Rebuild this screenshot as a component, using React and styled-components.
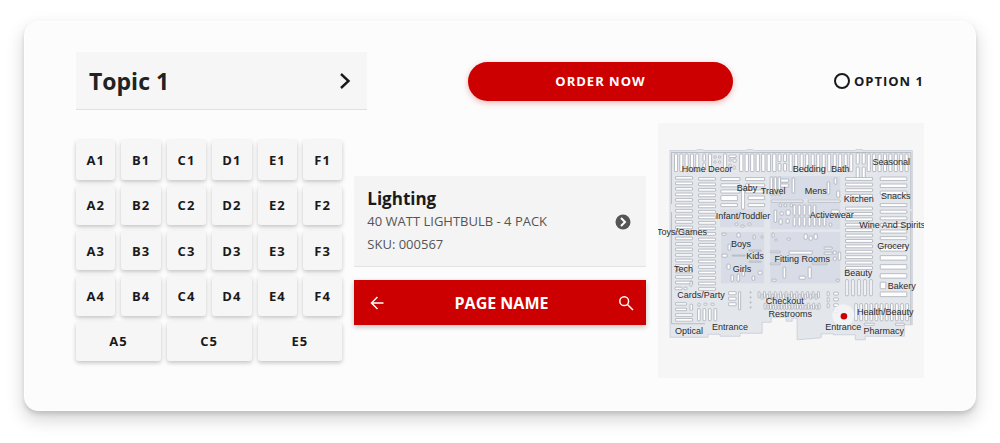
import React from "react";
import styled, { createGlobalStyle } from "styled-components";

const GlobalStyle = createGlobalStyle`
  *, *::before, *::after { box-sizing: border-box; }
  body {
    margin: 0;
    background: #fff;
    color: #1a1a1a;
    font-family: "Open Sans", "Noto Sans", sans-serif;
  }
  button { font-family: inherit; color: inherit; cursor: pointer; }
`;

const Page = styled.div`
  padding: 21px 24px 32px;
`;

const Board = styled.main`
  display: flex;
  flex-direction: column;
  gap: 13px;
  padding: 30px 51px 32px;
  background: #fcfcfc;
  border: 1px solid #fff;
  border-radius: 14px;
  box-shadow: 0 8px 18px rgba(0, 0, 0, 0.18), 0 3px 4px rgba(0, 0, 0, 0.12);
`;

const TopRow = styled.div`
  display: grid;
  grid-template-columns: 291fr 101fr 265fr 101fr auto;
  align-items: center;
`;

const Topic = styled.button`
  grid-column: 1;
  display: flex;
  align-items: center;
  justify-content: space-between;
  height: 58px;
  padding: 0 16px 0 13px;
  border: 0;
  border-bottom: 1px solid #e0e0e0;
  background: #f6f6f6;
  color: #222;
  font-size: 23px;
  font-weight: 700;
`;

const OrderButton = styled.button`
  grid-column: 3;
  height: 39px;
  border: 0;
  border-radius: 20px;
  background: #c00;
  color: #fff;
  font-size: 13px;
  font-weight: 700;
  letter-spacing: 1px;
  box-shadow: 0 2px 6px rgba(204, 0, 0, 0.28);
`;

const Option = styled.label`
  grid-column: 5;
  display: flex;
  align-items: center;
  gap: 4px;
  font-size: 13px;
  font-weight: 700;
  letter-spacing: 1px;
  white-space: nowrap;
`;

const Radio = styled.input`
  appearance: none;
  width: 16px;
  height: 16px;
  margin: 0;
  border: 2px solid #1a1a1a;
  border-radius: 50%;
  &:checked { background: #c00; }
`;

const Columns = styled.div`
  display: grid;
  grid-template-columns: 266fr 291fr 266fr;
  gap: 12px;
  align-items: center;
`;

const Keypad = styled.div`
  display: grid;
  grid-template-columns: repeat(6, 1fr);
  grid-auto-rows: 1fr;
  gap: 6px;
`;

const Key = styled.button`
  grid-column: span ${(p) => (p.$wide ? 2 : 1)};
  ${(p) => (p.$wide ? "" : "aspect-ratio: 1;")}
  padding: 0;
  border: 0;
  border-radius: 3px;
  background: #f6f6f6;
  font-size: 13px;
  font-weight: 700;
  letter-spacing: 1px;
  box-shadow: 0 2px 4px rgba(0, 0, 0, 0.22);
`;

const Stack = styled.div`
  display: flex;
  flex-direction: column;
  gap: 13px;
`;

const Product = styled.a`
  display: flex;
  align-items: center;
  justify-content: space-between;
  padding: 12px 15px 10px 13px;
  border-bottom: 1px solid #e2e2e2;
  background: #f4f4f4;
  color: #555;
  text-decoration: none;
`;

const ProductName = styled.h2`
  margin: 0;
  color: #1a1a1a;
  font-size: 17px;
  line-height: 22px;
  font-weight: 700;
`;

const ProductLine = styled.p`
  margin: 0;
  font-size: 13px;
  line-height: 23px;
`;

const PageBar = styled.header`
  display: flex;
  align-items: center;
  justify-content: space-between;
  height: 45px;
  padding: 0 12px 0 15px;
  background: #c00;
  color: #fff;
  box-shadow: 0 2px 5px rgba(0, 0, 0, 0.24);
`;

const PageTitle = styled.h1`
  margin: 0;
  font-size: 16px;
  font-weight: 700;
`;

const IconButton = styled.button`
  display: flex;
  padding: 0;
  border: 0;
  background: none;
  color: #fff;
`;

const MapPanel = styled.figure`
  margin: 0;
  background: #f6f6f6;
`;

const MapDrawing = styled.svg`
  display: block;
  width: 100%;
  height: auto;
`;

const MapLabel = styled.text`
  font-family: "Liberation Sans", Arial, sans-serif;
  font-size: 9px;
  fill: #2b2b2b;
`;

const ROWS = ["1", "2", "3", "4"];
const LETTERS = ["A", "B", "C", "D", "E", "F"];

const range = (n) => Array.from({ length: n }, (_, i) => i);
const down = (x, y, w, h, n, pitch) => range(n).map((i) => [x, y + i * pitch, w, h]);
const across = (x, y, w, h, n, pitch) => range(n).map((i) => [x + i * pitch, y, w, h]);

const ZONES = [
  [720, 209, 44, 18], [770, 176, 70, 23], [770, 202, 70, 27],
  [721, 232, 43, 51], [770, 232, 70, 51],
];

const SHELVES = [
  ...across(674.5, 154, 3, 17.5, 5, 5.3),
  ...down(703, 154, 2.5, 7, 2, 9), [708.5, 154, 3, 17],
  ...down(714, 156, 2, 2, 2, 5), ...down(718.5, 156, 2, 2, 2, 5),
  [723.5, 154, 3, 17.5], [729, 155, 7, 2.5], [729, 159, 2, 2], [733, 159, 3, 3], [729, 164, 2, 4], [733, 166, 2, 3],
  ...across(739.5, 154, 3.3, 17.5, 7, 5.5),
  ...down(778, 154, 2.8, 7.5, 2, 9.5), ...down(783.5, 154, 2.8, 7.5, 2, 9.5),
  ...across(789, 154, 3, 17.5, 12, 5.5),
  ...down(856, 153, 3, 11, 2, 14), ...down(862, 153, 3, 11, 2, 14),
  ...across(867, 154, 3, 17.5, 8, 5.4),
  ...down(675.5, 176.5, 17, 2.6, 20, 5.5),
  [675, 287, 7, 2.5], [684, 287, 3, 2.5], [690, 281, 2, 5],
  ...down(675.5, 302.5, 11, 2.4, 2, 5.5), ...down(675.5, 313.5, 17, 2.6, 2, 4.8),
  [690, 304, 2.5, 6],
  ...down(698.5, 177.5, 17, 2.6, 21, 5.5),
  ...across(697.5, 308.5, 2.6, 12, 4, 5.5), [698, 303, 2, 3], [704, 303, 3, 2], [711, 303, 3, 2],
  ...down(720.8, 177.5, 19, 3, 3, 6.2), [720.8, 195.5, 16.5, 5], [720.8, 203.5, 16.5, 3],
  ...down(745.5, 177.5, 19, 3, 3, 6.2), [748, 196, 16.5, 3.5], [748, 203.5, 16.5, 3],
  [741.5, 189, 3, 20],
  ...across(770, 177, 2.5, 18, 3, 4), [780.5, 179, 8, 3], [780.5, 184, 8, 3], [792, 178, 2.5, 15],
  [771, 200, 32, 2], [808, 200, 32, 2],
  [827, 182, 2.5, 12], [834, 178, 2.5, 6], [836.5, 191, 3, 6],
  [774, 210, 2.5, 12], [779, 204, 2.5, 2.5], [784, 204, 2.5, 2.5], [790, 204, 2.5, 2.5],
  [780, 212, 3, 3], [786, 210, 4, 5], [779, 219, 3, 5], [786, 219, 3, 4],
  ...across(793, 205, 2.6, 10, 5, 5), ...across(793, 217, 2.6, 9, 7, 5), [831, 210, 8, 3], [829, 223, 2.5, 3],
  [735, 223, 3, 2], [741, 225, 3, 2], [748, 223, 3, 2],
  [722, 233, 4, 2], [737, 233, 3, 4], [753, 235, 2, 4], [761, 236, 2, 2],
  [728, 244, 2.5, 6], [722, 254, 5, 3], [732, 255, 13, 0.8], [749, 250, 12, 1], [749, 261, 12, 1],
  [727, 264, 3, 5], [731, 275, 2.5, 6], [737, 274, 2.5, 7], [742, 271, 2.5, 5], [752, 276, 2.5, 4], [758, 271, 4, 3],
  [772, 233, 2, 4], [775, 239, 2, 2], [787, 238, 3, 2], [804, 234, 3, 5], [809, 236, 3, 4], [814, 234, 3, 5],
  [770, 251, 10, 1.5], [789, 251, 23, 3], [824, 247, 8, 2], [824, 252, 8, 2], [833, 251, 3, 3], [838, 252, 2.5, 8], [833, 257, 3, 3],
  [770, 263, 10, 1.5], [783, 267, 2.5, 11], [808, 267, 3, 11], [799, 276, 6, 3], [812, 263, 15, 1.5], [772, 279, 4, 2], [836, 279, 3, 2],
  ...down(845.3, 177.5, 27, 2.8, 4, 5.6), ...down(845.3, 207, 27, 2.8, 12, 5.4),
  ...across(845.5, 279.5, 2.5, 16, 5, 6),
  ...down(880, 177, 26.5, 3.4, 3, 7), ...down(880, 203.5, 26.5, 3, 6, 6.6),
  ...down(880, 246.5, 26.5, 4.4, 4, 9), [880, 282, 5.5, 6.5], [880, 291.8, 26.5, 4.6],
  ...across(854.5, 303.5, 2.6, 17, 11, 5.1),
  [864, 323, 10, 2], [895, 323, 9, 2],
  ...down(728.5, 291.5, 7.5, 3, 3, 5.5), [738.5, 291.5, 2, 18],
  ...down(750, 291.5, 1, 1.4, 4, 5), ...down(833.5, 292, 4.5, 2.8, 4, 5.8),
  ...across(758, 291.5, 1.8, 6, 12, 5.4), ...across(761, 294, 1.8, 5, 11, 5.4),
  ...across(764, 303, 1.8, 6, 11, 5.4), ...across(767, 305, 1.8, 4, 10, 5.4),
  ...down(827, 291.5, 2, 4, 3, 6),
];

const LABELS = [
  ["Home Decor", 707, 172], ["Bedding", 809, 172], ["Bath", 840, 172], ["Seasonal", 891, 165],
  ["Baby", 747, 191], ["Travel", 773, 194], ["Mens", 815.5, 194], ["Kitchen", 858.5, 202],
  ["Snacks", 895.5, 199], ["Infant/Toddler", 743, 219], ["Activewear", 831.5, 218],
  ["Wine And Spirits", 892, 228], ["Toys/Games", 682, 235], ["Boys", 741, 247],
  ["Kids", 755, 259], ["Fitting Rooms", 802, 262], ["Grocery", 893, 249],
  ["Tech", 683.5, 272], ["Girls", 742, 272], ["Beauty", 858, 276], ["Bakery", 901.5, 289],
  ["Cards/Party", 701, 298], ["Checkout", 784.5, 304], ["Restrooms", 790, 317],
  ["Health/Beauty", 885, 315], ["Optical", 689, 334], ["Entrance", 730, 330],
  ["Entrance", 843, 330], ["Pharmacy", 883.5, 334],
];

function StoreMap() {
  return (
    <MapDrawing viewBox="658 123 266 255" role="img" aria-label="Store map">
      <path
        d="M670 150.500H695L698 149.500H702L704 150.500H745L748 149.500H752L754 150.500H854L856 149.500H862V150.500H912V324.500H904V336H865V339.500H855V334.500H833V333.500H821V337.500L797 339.500V318H792V321H786V317H771V322H762V333H740V336H720V334H708V337H670Z"
        fill="#e3e6eb"
        stroke="#c8ccd6"
        strokeWidth="0.8"
      />
      <path d="M671.500 204V152.500H910.500V209M671.500 212V323.500H705M910.500 211V324" fill="none" stroke="#aeb4bb" strokeWidth="0.8" />
      {ZONES.map(([x, y, w, h], i) => (
        <rect key={i} x={x} y={y} width={w} height={h} fill="#d7dce6" />
      ))}
      {SHELVES.map(([x, y, w, h], i) => (
        <rect key={i} x={x} y={y} width={w} height={h} rx="0.4" fill="#fff" stroke="#959ba5" strokeWidth="0.6" />
      ))}
      <circle cx="843" cy="315" r="11" fill="#f3f4f7" fillOpacity="0.85" />
      {LABELS.map(([name, x, y], i) => (
        <MapLabel key={i} x={x} y={y} textAnchor="middle">{name}</MapLabel>
      ))}
      <circle cx="843.700" cy="316" r="3.300" fill="#c00" />
    </MapDrawing>
  );
}

export default function App() {
  return (
    <Page>
      <GlobalStyle />
      <Board>
        <TopRow>
          <Topic type="button">
            Topic 1
            <svg width="12" height="18" viewBox="0 0 12 18" fill="none" stroke="#1a1a1a" strokeWidth="2.400" aria-hidden="true">
              <path d="M2 2L9.500 9L2 16" />
            </svg>
          </Topic>
          <OrderButton type="button">ORDER NOW</OrderButton>
          <Option>
            <Radio type="radio" name="option" />
            OPTION 1
          </Option>
        </TopRow>
        <Columns>
          <Keypad>
            {ROWS.flatMap((row) =>
              LETTERS.map((letter) => (
                <Key key={letter + row} type="button">{letter + row}</Key>
              ))
            )}
            {["A5", "C5", "E5"].map((name) => (
              <Key key={name} type="button" $wide>{name}</Key>
            ))}
          </Keypad>
          <Stack>
            <Product href="#lighting">
              <div>
                <ProductName>Lighting</ProductName>
                <ProductLine>40 WATT LIGHTBULB - 4 PACK</ProductLine>
                <ProductLine>SKU: 000567</ProductLine>
              </div>
              <svg width="16" height="16" viewBox="0 0 16 16" aria-hidden="true">
                <circle cx="8" cy="8" r="7.500" fill="#555" />
                <path d="M6 4L10 8L6 12" fill="none" stroke="#fff" strokeWidth="2" />
              </svg>
            </Product>
            <PageBar>
              <IconButton type="button" aria-label="Back">
                <svg width="16" height="16" viewBox="0 0 16 16" fill="none" stroke="currentColor" strokeWidth="1.500">
                  <path d="M14.500 8H2.500M8.500 2L2.500 8L8.500 14" />
                </svg>
              </IconButton>
              <PageTitle>PAGE NAME</PageTitle>
              <IconButton type="button" aria-label="Search">
                <svg width="16" height="16" viewBox="0 0 16 16" fill="none" stroke="currentColor" strokeWidth="1.500">
                  <circle cx="6.200" cy="6.200" r="4.400" />
                  <path d="M9.500 9.500L15 15" />
                </svg>
              </IconButton>
            </PageBar>
          </Stack>
          <MapPanel>
            <StoreMap />
          </MapPanel>
        </Columns>
      </Board>
    </Page>
  );
}
